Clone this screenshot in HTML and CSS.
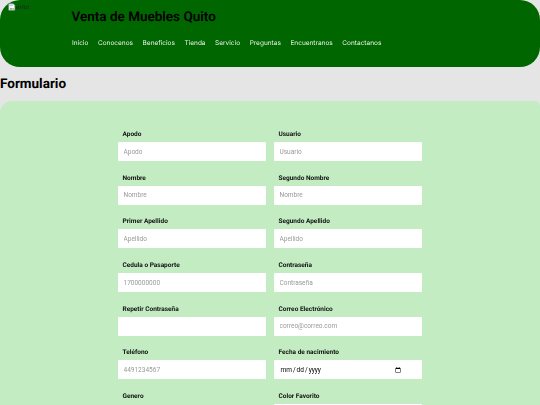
FILE: index.html
```html
<!DOCTYPE html>
<html lang="es">

<head>
  <meta charset="UTF-8">
  <meta name="viewport" content="width=device-width, initial-scale=1.0">
  <title>Venta de Muebles Quito</title>
  <link rel="stylesheet" href="styles.css">
</head>

<body>
  <header class="header">
    <div class="logo">
      <svg class="logo-icon" width="16" height="16" viewBox="0 0 16 16">
        <path d="M1.500 1.500h9l3 3v10h-12z" fill="#fff" stroke="#9a9a9a"/>
        <path d="M2.500 13l3.500-4 2.500 2.500 2-1.500 2 3z" fill="#6fa55f"/>
        <path d="M2.500 2.500h7v4h-7z" fill="#b9cdf0"/>
      </svg>
      <span>error</span>
    </div>
    <div class="header-main">
      <h1 class="title">Venta de Muebles Quito</h1>
      <nav class="nav">
        <a href="#">Inicio</a>
        <a href="#">Conocenos</a>
        <a href="#">Beneficios</a>
        <a href="#">Tienda</a>
        <a href="#">Servicio</a>
        <a href="#">Preguntas</a>
        <a href="#">Encuentranos</a>
        <a href="#">Contactanos</a>
      </nav>
    </div>
  </header>

  <h2 class="page-title">Formulario</h2>

  <main class="panel">
    <form class="form">
      <div class="field">
        <label>Apodo</label>
        <input type="text" placeholder="Apodo">
      </div>
      <div class="field">
        <label>Usuario</label>
        <input type="text" placeholder="Usuario">
      </div>
      <div class="field">
        <label>Nombre</label>
        <input type="text" placeholder="Nombre">
      </div>
      <div class="field">
        <label>Segundo Nombre</label>
        <input type="text" placeholder="Nombre">
      </div>
      <div class="field">
        <label>Primer Apellido</label>
        <input type="text" placeholder="Apellido">
      </div>
      <div class="field">
        <label>Segundo Apellido</label>
        <input type="text" placeholder="Apellido">
      </div>
      <div class="field">
        <label>Cedula o Pasaporte</label>
        <input type="text" placeholder="1700000000">
      </div>
      <div class="field">
        <label>Contraseña</label>
        <input type="password" placeholder="Contraseña">
      </div>
      <div class="field">
        <label>Repetir Contraseña</label>
        <input type="password">
      </div>
      <div class="field">
        <label>Correo Electrónico</label>
        <input type="email" placeholder="correo@correo.com">
      </div>
      <div class="field">
        <label>Teléfono</label>
        <input type="tel" placeholder="4491234567">
      </div>
      <div class="field">
        <label>Fecha de nacimiento</label>
        <input type="date">
      </div>
      <div class="field">
        <label>Genero</label>
        <span class="option">Hombre</span>
      </div>
      <div class="field">
        <label>Color Favorito</label>
        <input type="text">
      </div>
    </form>
  </main>
</body>

</html>
```

FILE: styles.css
```css
* {
  box-sizing: border-box;
}

html,
body {
  height: 405px;
  overflow: hidden;
}

body {
  margin: 0;
  background: #e5e5e5;
  font-family: Roboto, sans-serif;
  text-rendering: geometricPrecision;
}

.header {
  display: flex;
  height: 67px;
  background: #006600;
  border-radius: 20px;
}

.logo {
  display: flex;
  align-items: flex-start;
  width: 71.500px;
  padding: 3px 0 0 8px;
  font-size: 6.500px;
  line-height: 8px;
  color: #222;
}

.logo-icon {
  width: 8px;
  height: 8px;
  flex: none;
}

.title {
  margin: 0;
  padding-top: 8px;
  font-size: 13.500px;
  line-height: 18px;
  font-weight: 600;
  color: #000;
}

.nav {
  display: flex;
  gap: 9.600px;
  margin-top: 13px;
  will-change: transform;
}

.nav a {
  font-size: 6.500px;
  line-height: 9px;
  color: #e8f3e8;
  text-decoration: none;
  font-family: Inter, sans-serif;
}

.page-title {
  margin: 0;
  padding-top: 9px;
  height: 34px;
  font-size: 13.500px;
  line-height: 17px;
  font-weight: 700;
  color: #000;
}

.panel {
  height: 310px;
  padding-top: 28.500px;
  background: #c3ecc3;
  border-radius: 12px 5px 0 0;
}

.form {
  display: grid;
  grid-template-columns: 148px 148px;
  column-gap: 8px;
  width: 304px;
  margin-left: 118px;
  will-change: transform;
}

.field {
  height: 43.700px;
  display: flex;
  flex-direction: column;
}

.field label {
  padding-left: 4.500px;
  font-size: 6.500px;
  line-height: 8px;
  height: 12px;
  font-weight: 700;
  color: #111;
}

.field input {
  width: 100%;
  height: 19px;
  padding: 0 5.500px;
  border: none;
  border-radius: 1px;
  background: #fff;
  font-family: Roboto, sans-serif;
  font-size: 6.500px;
}

.field input::placeholder {
  color: #999;
}

.field input::-webkit-calendar-picker-indicator {
  margin-right: 13px;
}

.option {
  font-size: 6.500px;
  line-height: 8px;
  color: #111;
}
```
